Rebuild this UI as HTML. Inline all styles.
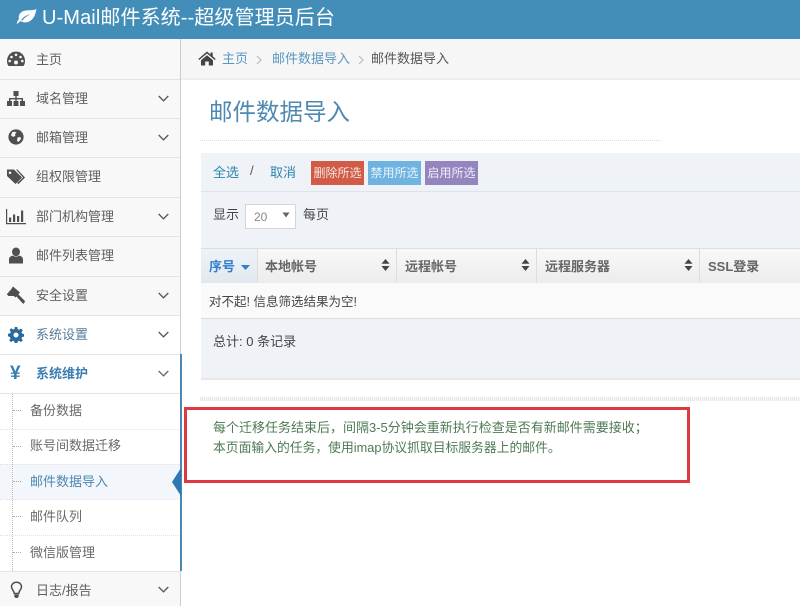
<!DOCTYPE html>
<html><head><meta charset="utf-8"><style>
html,body{margin:0;padding:0;background:#fff}
#p{position:relative;width:800px;height:606px;overflow:hidden;font-family:"Liberation Sans","Noto Sans CJK SC",sans-serif;font-size:13px;color:#555;background:#fff;filter:blur(.3px)}
#p div,#p span,#p svg{position:absolute}
.t{white-space:nowrap;line-height:20px}
.r{left:0;width:180px;height:1px;background:#e4e4e4}
.c{left:158px;width:11px;height:7px}
.l{left:36px;color:#5f5f5f}
.s{left:30px;color:#6a6a6a}
.sort{width:9px;height:12px}
.b{font-weight:bold;color:#666}
</style></head><body><div id="p">
<div style="left:0;top:0;width:800px;height:39px;background:#438eb9"></div>
<svg style="left:16px;top:8px" width="21" height="17" viewBox="0 0 21 17"><path d="M20.500 1C16.500 3 12 1.500 7.500 3C3.500 4.500 2 8 3 11C1.500 12.500 .8 14.500 .8 15.800C2 15.800 3 14 4.500 13C7.500 15 11.500 14.800 14.500 12.800C18.500 10 19.500 5.500 20.500 1ZM5.300 11.800C8 8.500 11 7 14.500 6C11 8 8.500 9.800 6.300 12.600Z" fill="#fff" fill-rule="evenodd"/></svg>
<span class="t" style="left:42px;top:6px;font-size:20px;line-height:24px;color:#fff;letter-spacing:.1px">U-Mail邮件系统--超级管理员后台</span>

<div style="left:0;top:39px;width:180px;height:276px;background:#f8f8f8"></div>
<div style="left:0;top:572px;width:180px;height:34px;background:#f8f8f8"></div>
<div style="left:180px;top:39px;width:1px;height:567px;background:#ccc"></div>
<div class="r" style="top:79px"></div><div class="r" style="top:118px"></div><div class="r" style="top:157px"></div><div class="r" style="top:197px"></div><div class="r" style="top:236px"></div><div class="r" style="top:276px"></div><div class="r" style="top:315px"></div><div class="r" style="top:354px"></div><div class="r" style="top:393px"></div><div class="r" style="top:571px"></div>
<div style="left:180px;top:354px;width:2px;height:217px;background:#4b88b4"></div>

<svg style="left:6px;top:50px" width="20" height="18" viewBox="0 0 20 18"><path d="M10 1.500C4.500 1.500 1 6 1 11C1 13 1.500 14.500 2.500 16L17.500 16C18.500 14.500 19 13 19 11C19 6 15.500 1.500 10 1.500Z" fill="#4f4f4f"/><g fill="#f8f8f8"><circle cx="10" cy="4.800" r="1.300"/><circle cx="5.500" cy="7" r="1.300"/><circle cx="14.500" cy="7" r="1.300"/><circle cx="3.700" cy="11" r="1.300"/><circle cx="16.300" cy="11" r="1.300"/><circle cx="10" cy="12.500" r="2"/></g></svg>
<svg style="left:6px;top:90px" width="20" height="17" viewBox="0 0 20 17"><path d="M7.500 1h5v5h-5zM1 11h5v5H1zM7.500 11h5v5h-5zM14 11h5v5h-5zM3 11V8h6.300V6h1.400v2H17v3h-1.400V9.400H10.700V11H9.300V9.400H4.400V11z" fill="#4f4f4f"/></svg>
<svg style="left:8px;top:129px" width="16" height="16" viewBox="0 0 16 16"><circle cx="8" cy="8" r="7.600" fill="#4f4f4f"/><path d="M4 3.500C5.500 2.500 7.500 2.500 8.500 3.500L7 5L7.500 6.500L5.500 8L3 6.500ZM9.500 8.500L12.500 8L13 10L10.500 13L9 12Z" fill="#f8f8f8"/></svg>
<svg style="left:6px;top:168px" width="20" height="18" viewBox="0 0 20 18"><path d="M1 1.500h7L16 9.500l-6.500 6.500L1 8zM4 3.500a1.300 1.300 0 1 0 .01 0z" fill="#4f4f4f" fill-rule="evenodd"/><path d="M10 1.500h1.500L19 9.500 12.500 16l-1.500-1L17 9.500z" fill="#4f4f4f"/></svg>
<svg style="left:5px;top:208px" width="21" height="17" viewBox="0 0 21 17"><path d="M1 1h1.200v14H21v1.200H1zM4 9.500h2.200V14H4zM8 6.500h2.200V14H8zM12 8h2.200v6H12zM16 2.500h2.200V14H16z" fill="#4f4f4f"/></svg>
<svg style="left:8px;top:247px" width="16" height="17" viewBox="0 0 16 17"><ellipse cx="8" cy="4.800" rx="4" ry="4.300" fill="#4f4f4f"/><path d="M1 16.500V12.500C1 10 3 9 5 8.500C6.500 10 9.500 10 11 8.500C13 9 15 10 15 12.500V16.500Z" fill="#4f4f4f"/></svg>
<svg style="left:6px;top:286px" width="20" height="19" viewBox="0 0 20 19"><path d="M7 .5L14 6.500L9.500 11.500L7.800 10L2.500 10L.8 8.300L5 3.500ZM10 10L12 8L19.200 15.200L17.300 18Z" fill="#4f4f4f"/></svg>
<svg style="left:8px;top:327px" width="16" height="16" viewBox="0 0 16 16"><path d="M6.700 0h2.600l.4 2.200 1.400.6 1.900-1.300 1.800 1.800-1.300 1.900.6 1.400 2.200.4v2.600l-2.200.4-.6 1.400 1.300 1.900-1.800 1.800-1.900-1.300-1.400.6-.4 2.200H6.700l-.4-2.200-1.400-.6-1.900 1.300-1.800-1.800 1.300-1.900-.6-1.400L0 9.300V6.700l2.200-.4.600-1.400-1.300-1.900 1.800-1.800 1.900 1.300 1.400-.6zM8 5.500a2.500 2.500 0 1 0 .01 0z" fill="#2a6a9e" fill-rule="evenodd"/></svg>
<span class="t" style="left:10px;top:364px;font-size:19px;font-weight:bold;color:#3a7db0">¥</span>
<svg style="left:10px;top:581px" width="13" height="18" viewBox="0 0 13 18"><path d="M6.500 1.200C3.500 1.200 1.500 3.300 1.500 5.800C1.500 8.500 4 9.500 4.300 12.500H8.700C9 9.500 11.500 8.500 11.500 5.800C11.500 3.300 9.500 1.200 6.500 1.200Z" fill="none" stroke="#4f4f4f" stroke-width="1.500"/><path d="M4.300 13.500h4.400v2.300l-1.300 1.200h-1.800L4.300 15.800z" fill="#4f4f4f"/></svg>

<span class="t l" style="top:50px">主页</span>
<span class="t l" style="top:89px">域名管理</span>
<span class="t l" style="top:128px">邮箱管理</span>
<span class="t l" style="top:167px">组权限管理</span>
<span class="t l" style="top:207px">部门机构管理</span>
<span class="t l" style="top:246px">邮件列表管理</span>
<span class="t l" style="top:286px">安全设置</span>
<span class="t l" style="top:325px;color:#567d9b">系统设置</span>
<span class="t l" style="top:364px;color:#3a7db0;font-weight:bold">系统维护</span>
<span class="t l" style="top:581px">日志/报告</span>

<svg class="c" style="top:95px" viewBox="0 0 11 7"><path d="M.7 1L5.500 5.800 10.300 1" fill="none" stroke="#555" stroke-width="1.300"/></svg>
<svg class="c" style="top:134px" viewBox="0 0 11 7"><path d="M.7 1L5.500 5.800 10.300 1" fill="none" stroke="#555" stroke-width="1.300"/></svg>
<svg class="c" style="top:213px" viewBox="0 0 11 7"><path d="M.7 1L5.500 5.800 10.300 1" fill="none" stroke="#555" stroke-width="1.300"/></svg>
<svg class="c" style="top:292px" viewBox="0 0 11 7"><path d="M.7 1L5.500 5.800 10.300 1" fill="none" stroke="#555" stroke-width="1.300"/></svg>
<svg class="c" style="top:331px" viewBox="0 0 11 7"><path d="M.7 1L5.500 5.800 10.300 1" fill="none" stroke="#555" stroke-width="1.300"/></svg>
<svg class="c" style="top:370px" viewBox="0 0 11 7"><path d="M.7 1L5.500 5.800 10.300 1" fill="none" stroke="#666" stroke-width="1.300"/></svg>
<svg class="c" style="top:586px" viewBox="0 0 11 7"><path d="M.7 1L5.500 5.800 10.300 1" fill="none" stroke="#555" stroke-width="1.300"/></svg>

<div style="left:0;top:464px;width:180px;height:35px;background:#f3f6fa"></div>
<div style="left:12px;top:394px;width:0;height:177px;border-left:1px dotted #bbb"></div>
<div style="left:0;top:429px;width:180px;border-top:1px dotted #e2e2e2"></div>
<div style="left:0;top:464px;width:180px;border-top:1px dotted #e2e2e2"></div>
<div style="left:0;top:499px;width:180px;border-top:1px dotted #e2e2e2"></div>
<div style="left:0;top:535px;width:180px;border-top:1px dotted #e2e2e2"></div>
<div style="left:13px;top:410px;width:8px;border-top:1px dotted #aaa"></div>
<div style="left:13px;top:446px;width:8px;border-top:1px dotted #aaa"></div>
<div style="left:13px;top:481px;width:8px;border-top:1px dotted #aaa"></div>
<div style="left:13px;top:516px;width:8px;border-top:1px dotted #aaa"></div>
<div style="left:13px;top:552px;width:8px;border-top:1px dotted #aaa"></div>
<span class="t s" style="top:401px">备份数据</span>
<span class="t s" style="top:436px">账号间数据迁移</span>
<span class="t s" style="top:472px;color:#4b88b4">邮件数据导入</span>
<span class="t s" style="top:507px">邮件队列</span>
<span class="t s" style="top:543px">微信版管理</span>
<svg style="left:172px;top:468px" width="9" height="28" viewBox="0 0 9 28"><path d="M9 0V28L0 14Z" fill="#2e77b0"/></svg>

<div style="left:181px;top:39px;width:619px;height:39px;background:#f6f6f6;border-bottom:2px solid #eee"></div>
<svg style="left:198px;top:51px" width="18" height="15" viewBox="0 0 18 15"><path d="M9 .5L12.500 3.500V1.500H14.700V5.300L17.700 8L16.800 9L9 2.500L1.200 9L.3 8ZM3 9.300L9 4.300L15 9.300V14.500H10.800V10.500H7.200V14.500H3Z" fill="#444"/></svg>
<span class="t" style="left:222px;top:49px;color:#5b97bf">主页</span>
<svg style="left:256px;top:55px" width="6" height="10" viewBox="0 0 6 10"><path d="M1 1L5 5 1 9" fill="none" stroke="#bbb" stroke-width="1.200"/></svg>
<span class="t" style="left:272px;top:49px;color:#5b97bf">邮件数据导入</span>
<svg style="left:358px;top:55px" width="6" height="10" viewBox="0 0 6 10"><path d="M1 1L5 5 1 9" fill="none" stroke="#bbb" stroke-width="1.200"/></svg>
<span class="t" style="left:371px;top:49px;color:#555">邮件数据导入</span>

<span class="t" style="left:209px;top:97px;font-size:23.500px;line-height:30px;color:#4f89b2">邮件数据导入</span>
<div style="left:200px;top:140px;width:461px;border-top:1px dotted #ddd"></div>

<div style="left:201px;top:153px;width:599px;height:225px;background:#eff3f8;border-bottom:2px solid #e6e8ea"></div>
<div style="left:201px;top:191px;width:599px;height:1px;background:#dde3ea"></div>
<span class="t" style="left:213px;top:163px;color:#2d83b0">全选</span>
<span class="t" style="left:250px;top:161px;color:#555">/</span>
<span class="t" style="left:270px;top:163px;color:#2d83b0">取消</span>
<div class="t" style="left:311px;top:161px;width:53px;height:24px;line-height:24px;background:#d15b47;color:#f4e6e0;text-align:center;font-size:12px">删除所选</div>
<div class="t" style="left:368px;top:161px;width:53px;height:24px;line-height:24px;background:#6fb3e0;color:#eaf4fa;text-align:center;font-size:12px">禁用所选</div>
<div class="t" style="left:425px;top:161px;width:53px;height:24px;line-height:24px;background:#9585bf;color:#f0ecf6;text-align:center;font-size:12px">启用所选</div>
<span class="t" style="left:213px;top:205px;color:#444">显示</span>
<div style="left:245px;top:204px;width:49px;height:23px;background:#fff;border:1px solid #d5d5d5"></div>
<span class="t" style="left:254px;top:207px;color:#888;font-size:12px">20</span>
<svg style="left:282px;top:212px" width="8" height="6" viewBox="0 0 8 6"><path d="M.5 .5h7L4 5.500z" fill="#666"/></svg>
<span class="t" style="left:303px;top:205px;color:#444">每页</span>

<div style="left:201px;top:248px;width:599px;height:34px;background:linear-gradient(#f8f8f8,#ececec);border-top:1px solid #ddd;border-bottom:2px solid #d8d8d8"></div>
<div style="left:201px;top:249px;width:57px;height:34px;background:linear-gradient(#eef3f8,#e2e8ef)"></div>
<div style="left:257px;top:249px;width:1px;height:34px;background:#ddd"></div>
<div style="left:396px;top:249px;width:1px;height:34px;background:#ddd"></div>
<div style="left:536px;top:249px;width:1px;height:34px;background:#ddd"></div>
<div style="left:699px;top:249px;width:1px;height:34px;background:#ddd"></div>
<span class="t" style="left:209px;top:257px;color:#307ecc;font-weight:bold">序号</span>
<svg style="left:241px;top:265px" width="9" height="5" viewBox="0 0 9 5"><path d="M0 0h9L4.500 5z" fill="#307ecc"/></svg>
<span class="t b" style="left:265px;top:257px">本地帐号</span>
<span class="t b" style="left:405px;top:257px">远程帐号</span>
<span class="t b" style="left:545px;top:257px">远程服务器</span>
<span class="t b" style="left:708px;top:257px">SSL登录</span>
<svg class="sort" style="left:381px;top:259px" viewBox="0 0 9 12"><path d="M4.500 0L8.500 4.800H.5zM.5 7H8.500L4.500 12z" fill="#444"/></svg>
<svg class="sort" style="left:521px;top:259px" viewBox="0 0 9 12"><path d="M4.500 0L8.500 4.800H.5zM.5 7H8.500L4.500 12z" fill="#444"/></svg>
<svg class="sort" style="left:684px;top:259px" viewBox="0 0 9 12"><path d="M4.500 0L8.500 4.800H.5zM.5 7H8.500L4.500 12z" fill="#444"/></svg>
<div style="left:201px;top:283px;width:599px;height:35px;background:#fafafa;border-bottom:1px solid #dcdcdc"></div>
<span class="t" style="left:209px;top:292px;color:#444;font-size:12.500px">对不起! 信息筛选结果为空!</span>
<span class="t" style="left:213px;top:332px;color:#444">总计: 0 条记录</span>

<div style="left:200px;top:397px;width:600px;height:4px;background:repeating-linear-gradient(90deg,#e8e8e8 0 1px,#f6f6f6 1px 2px)"></div>

<div style="left:184px;top:407px;width:500px;height:70px;border:3px solid #dd3a3f"></div>
<span class="t" style="left:213px;top:418px;color:#4f7a54;font-size:13px">每个迁移任务结束后，间隔3-5分钟会重新执行检查是否有新邮件需要接收；</span>
<span class="t" style="left:213px;top:438px;color:#4f7a54;font-size:12.800px">本页面输入的任务，使用imap协议抓取目标服务器上的邮件。</span>
</div></body></html>
